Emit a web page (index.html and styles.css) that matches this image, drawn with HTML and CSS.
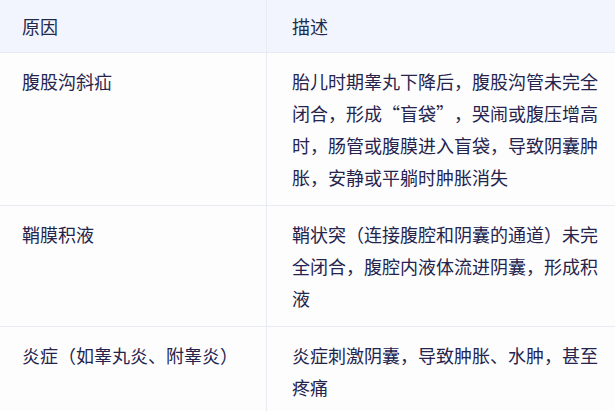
FILE: index.html
```html
<!DOCTYPE html>
<html lang="zh-CN">
<head>
<meta charset="utf-8">
<link rel="stylesheet" href="styles.css">
</head>
<body>
<div class="table">
  <div class="cell head c1">原因</div>
  <div class="cell head c2">描述</div>
  <div class="cell c1">腹股沟斜疝</div>
  <div class="cell c2">胎儿时期睾丸下降后，腹股沟管未完全闭合，形成“盲袋”，哭闹或腹压增高时，肠管或腹膜进入盲袋，导致阴囊肿胀，安静或平躺时肿胀消失</div>
  <div class="cell c1">鞘膜积液</div>
  <div class="cell c2">鞘状突（连接腹腔和阴囊的通道）未完全闭合，腹腔内液体流进阴囊，形成积液</div>
  <div class="cell c1">炎症（如睾丸炎、附睾炎）</div>
  <div class="cell c2">炎症刺激阴囊，导致肿胀、水肿，甚至疼痛</div>
</div>
</body>
</html>
```

FILE: styles.css
```css
html, body {
  margin: 0;
  padding: 0;
  background: #fdfdfe;
  overflow: hidden;
}
body {
  font-family: "Noto Sans CJK SC", "Noto Sans", sans-serif;
  font-size: 18px;
  line-height: 32px;
  color: #25244d;
  text-spacing-trim: space-all;
}
.table {
  display: grid;
  grid-template-columns: 267px 348px;
  width: 615px;
}
.cell {
  padding: 12px 0 12px 22px;
  border-bottom: 1px solid #e9ebf4;
}
.c1 {
  border-right: 1px solid #e9ebf4;
  padding-right: 12px;
}
.c2 {
  padding-left: 25px;
  padding-right: 0;
}
.head {
  background: #f2f5fd;
  padding-top: 10px;
  padding-bottom: 10px;
  color: #1f2a4d;
}
```
